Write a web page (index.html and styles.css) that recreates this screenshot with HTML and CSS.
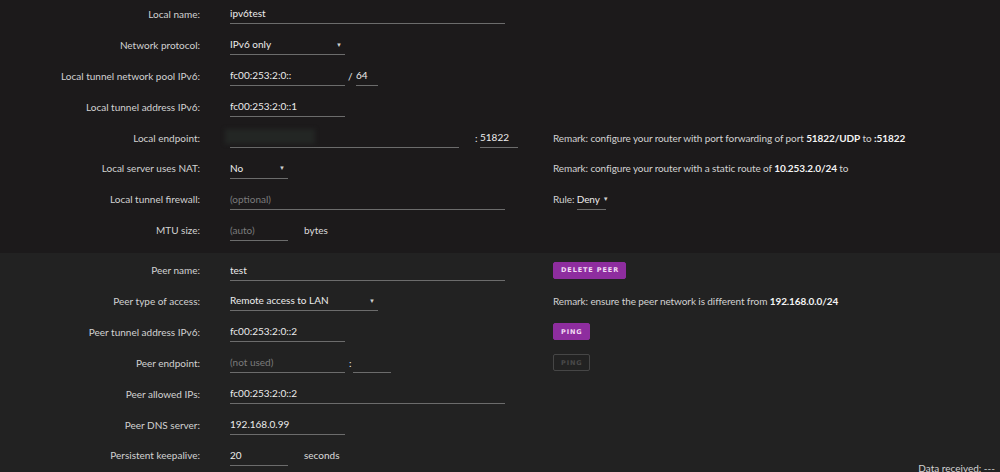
FILE: index.html
```html
<!DOCTYPE html>
<html lang="en">
<head>
    <meta charset="UTF-8">
    <title>Tunnel settings</title>
    <link rel="stylesheet" href="styles.css">
</head>
<body>
<div class="section local">
    <div class="row">
        <label>Local name:</label>
        <div class="field"><input class="w-full" type="text" value="ipv6test"></div>
    </div>
    <div class="row">
        <label>Network protocol:</label>
        <div class="field"><div class="select w-med"><span>IPv6 only</span><span class="arrow">▼</span></div></div>
    </div>
    <div class="row">
        <label>Local tunnel network pool IPv6:</label>
        <div class="field">
            <input class="w-med" type="text" value="fc00:253:2:0::">
            <span class="sep slash">/</span>
            <input class="w-xs" type="text" value="64">
        </div>
    </div>
    <div class="row">
        <label>Local tunnel address IPv6:</label>
        <div class="field"><input class="w-med" type="text" value="fc00:253:2:0::1"></div>
    </div>
    <div class="row">
        <label>Local endpoint:</label>
        <div class="field">
            <div class="masked w-long"><span class="blur"></span></div>
            <span class="sep colon-wide">:</span>
            <input class="w-port" type="text" value="51822">
        </div>
        <div class="remark">Remark: configure your router with port forwarding of port <b>51822/UDP</b> to <b>:51822</b></div>
    </div>
    <div class="row">
        <label>Local server uses NAT:</label>
        <div class="field"><div class="select w-sm"><span>No</span><span class="arrow">▼</span></div></div>
        <div class="remark">Remark: configure your router with a static route of <b>10.253.2.0/24</b> to</div>
    </div>
    <div class="row">
        <label>Local tunnel firewall:</label>
        <div class="field"><input class="w-full" type="text" placeholder="(optional)"></div>
        <div class="remark">Rule: <div class="select rule"><span>Deny</span><span class="arrow">▼</span></div></div>
    </div>
    <div class="row">
        <label>MTU size:</label>
        <div class="field"><input class="w-sm" type="text" placeholder="(auto)"><span class="unit">bytes</span></div>
    </div>
</div>

<div class="section peer">
    <div class="row">
        <label>Peer name:</label>
        <div class="field"><input class="w-full" type="text" value="test"></div>
        <div class="remark"><button class="btn">Delete peer</button></div>
    </div>
    <div class="row">
        <label>Peer type of access:</label>
        <div class="field"><div class="select w-type"><span>Remote access to LAN</span><span class="arrow">▼</span></div></div>
        <div class="remark">Remark: ensure the peer network is different from <b>192.168.0.0/24</b></div>
    </div>
    <div class="row">
        <label>Peer tunnel address IPv6:</label>
        <div class="field"><input class="w-med" type="text" value="fc00:253:2:0::2"></div>
        <div class="remark"><button class="btn">Ping</button></div>
    </div>
    <div class="row">
        <label>Peer endpoint:</label>
        <div class="field">
            <input class="w-med" type="text" placeholder="(not used)">
            <span class="sep colon">:</span>
            <input class="w-port" type="text">
        </div>
        <div class="remark"><button class="btn disabled" disabled>Ping</button></div>
    </div>
    <div class="row">
        <label>Peer allowed IPs:</label>
        <div class="field"><input class="w-full" type="text" value="fc00:253:2:0::2"></div>
    </div>
    <div class="row">
        <label>Peer DNS server:</label>
        <div class="field"><input class="w-med" type="text" value="192.168.0.99"></div>
    </div>
    <div class="row">
        <label>Persistent keepalive:</label>
        <div class="field"><input class="w-sm" type="text" value="20"><span class="unit">seconds</span></div>
    </div>
    <div class="stats">Data received: ---</div>
</div>
</body>
</html>
```

FILE: styles.css
```css
body {
    margin: 0;
    font-family: Lato, 'Liberation Sans', sans-serif;
    font-size: 10px;
    color: #d2d2d2;
    background: #222222;
    overflow: hidden;
}

.section {
    padding-bottom: 7px;
}

.local {
    background: #1c1a1b;
    margin-top: -1.5px;
}

.peer {
    background: #222222;
    padding-top: 2px;
}

.row {
    display: grid;
    grid-template-columns: 230px 323px 1fr;
    align-items: center;
    height: 30.9px;
}

.row label {
    text-align: right;
    padding-right: 30px;
}

.field {
    display: flex;
    align-items: center;
}

input, .select, .masked {
    box-sizing: border-box;
    height: 21px;
    padding: 0;
    border: none;
    border-bottom: 1px solid #6c6c6c;
    background: transparent;
    color: #ececec;
    font: inherit;
    outline: none;
}

input::placeholder {
    color: #7b7b7b;
}

.select {
    display: inline-flex;
    align-items: center;
    justify-content: space-between;
}

.select .arrow {
    font-size: 6px;
    color: #d0d0d0;
    padding-right: 3px;
}

.select.rule {
    width: 29px;
    justify-content: flex-start;
    gap: 3px;
}

.select.rule .arrow {
    padding-right: 0;
}

.w-full { width: 275px; }
.w-med { width: 115px; }
.w-long { width: 229px; }
.w-sm { width: 58px; }
.w-xs { width: 22px; }
.w-port { width: 38px; }
.w-type { width: 148px; }

.sep {
    color: #ececec;
}

.slash {
    width: 11px;
    padding-left: 3px;
    box-sizing: border-box;
}

.colon {
    width: 8px;
    padding-left: 4px;
    box-sizing: border-box;
}

.colon-wide {
    width: 21px;
    padding-left: 16px;
    box-sizing: border-box;
}

.masked {
    position: relative;
}

.masked .blur {
    position: absolute;
    left: -5px;
    top: 2px;
    width: 90px;
    height: 15px;
    background: #232624;
    filter: blur(2px);
}

.unit {
    margin-left: 16px;
    color: #dcdcdc;
}

.remark {
    display: flex;
    align-items: center;
    white-space: pre;
    letter-spacing: -0.1px;
}

.remark b {
    color: #f4f4f4;
}

.btn {
    font-family: 'DejaVu Sans', sans-serif;
    font-size: 6.5px;
    font-weight: bold;
    letter-spacing: 0.9px;
    text-transform: uppercase;
    color: #f1dcf3;
    background: #8e2d9f;
    border: 1px solid #8e2d9f;
    border-radius: 2px;
    height: 17px;
    padding: 0 6px 0 7px;
}

.btn.disabled {
    background: transparent;
    border-color: #464646;
    color: #4a4a4a;
}

.stats {
    text-align: right;
    padding-right: 5px;
    margin-top: -9px;
}
```
